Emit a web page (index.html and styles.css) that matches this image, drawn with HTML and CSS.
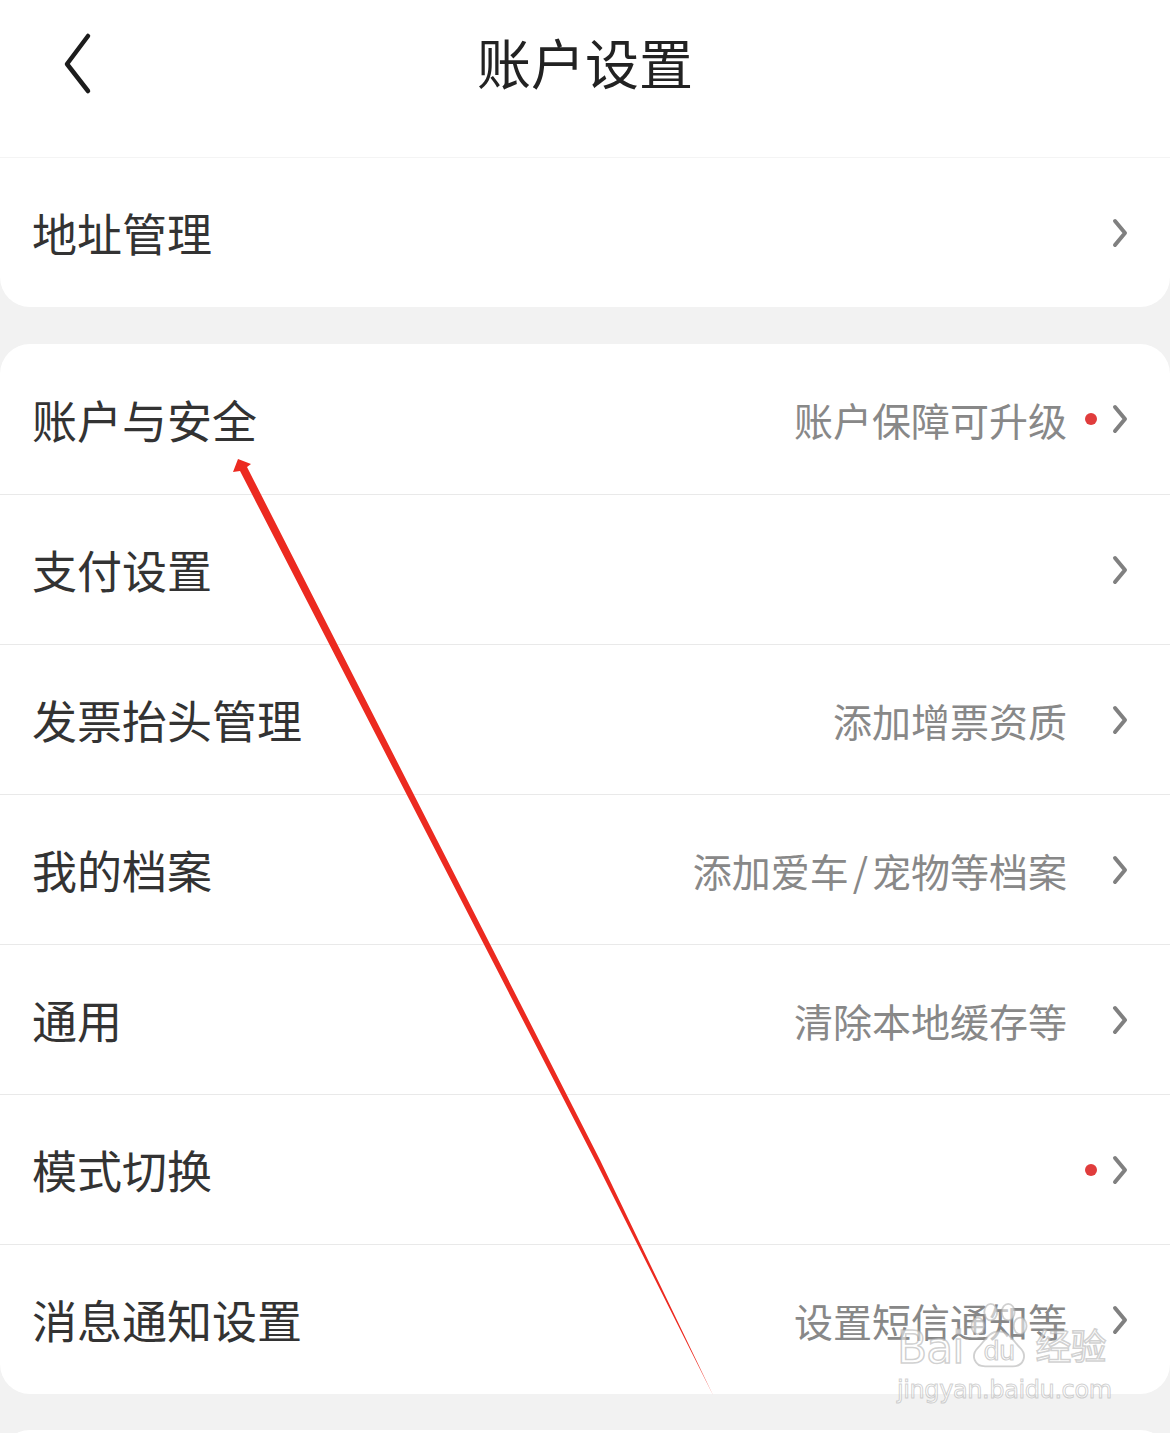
FILE: index.html
```html
<!DOCTYPE html>
<html lang="zh-CN">

<head>
    <meta charset="UTF-8">
    <meta name="viewport" content="width=device-width, initial-scale=1.0">
    <title>账户设置</title>
    <link rel="stylesheet" href="styles.css">
</head>

<body>
    <div class="header">
        <a class="back" href="#">
            <svg width="40" height="70" viewBox="0 0 40 70">
                <polyline points="28,6 7,34 28,61" fill="none" stroke="#1c1c1c" stroke-width="4.5"
                    stroke-linecap="round" stroke-linejoin="round" />
            </svg>
        </a>
        <div class="title">账户设置</div>
        <div></div>
    </div>

    <div class="card card-first">
        <div class="row">
            <span class="label">地址管理</span>
            <span class="extra">
                <span class="dot-slot"></span>
                <svg class="chevron" width="16" height="30" viewBox="0 0 16 30">
                    <polyline points="3,3 13,15 3,27" />
                </svg>
            </span>
        </div>
    </div>

    <div class="card" id="settingsList"></div>

    <div class="card card-last"></div>

    <!-- annotation arrow -->
    <svg class="arrow" width="1170" height="1433" viewBox="0 0 1170 1433">
        <polygon fill="#ec2a20"
            points="238,459 251,464 247,467 600,1160 713,1395 596,1162 240,471 233,472" />
    </svg>

    <div class="watermark">
        <div class="wm-logo">
            <span>Bai</span>
            <svg width="72" height="68" viewBox="0 0 78 74">
                <g fill="rgba(255,255,255,0.55)" stroke="rgba(170,170,170,0.55)" stroke-width="2">
                    <ellipse cx="16" cy="26" rx="7" ry="9" />
                    <ellipse cx="30" cy="11" rx="7" ry="9" />
                    <ellipse cx="49" cy="11" rx="7" ry="9" />
                    <ellipse cx="62" cy="26" rx="7" ry="9" />
                    <path d="M39 32 C28 32 24 42 16 50 C8 58 12 70 24 70 L54 70 C66 70 70 58 62 50 C54 42 50 32 39 32 Z" />
                </g>
                <text x="39" y="63" text-anchor="middle" class="wm-du">du</text>
            </svg>
            <span>经验</span>
        </div>
        <div class="wm-url">jingyan.baidu.com</div>
    </div>

    <script>
        const items = [
            { label: '账户与安全', extra: '账户保障可升级', dot: true },
            { label: '支付设置', extra: '' },
            { label: '发票抬头管理', extra: '添加增票资质' },
            { label: '我的档案', extra: '添加爱车<span class="slash">/</span>宠物等档案' },
            { label: '通用', extra: '清除本地缓存等' },
            { label: '模式切换', extra: '', dot: true },
            { label: '消息通知设置', extra: '设置短信通知等' }
        ];

        const list = document.getElementById('settingsList');
        items.forEach(function (item) {
            const row = document.createElement('div');
            row.className = 'row';
            row.innerHTML =
                '<span class="label">' + item.label + '</span>' +
                '<span class="extra">' +
                '<span class="hint">' + item.extra + '</span>' +
                '<span class="dot-slot">' + (item.dot ? '<i class="dot"></i>' : '') + '</span>' +
                '<svg class="chevron" width="16" height="30" viewBox="0 0 16 30"><polyline points="3,3 13,15 3,27" /></svg>' +
                '</span>';
            list.appendChild(row);
        });
    </script>
</body>

</html>
```

FILE: styles.css
```css
body {
    margin: 0;
    background-color: #f2f2f2;
    font-family: 'Noto Sans CJK SC', 'Noto Sans', sans-serif;
    color: #333;
    position: relative;
    overflow: hidden;
}

.header {
    display: grid;
    grid-template-columns: 1fr auto 1fr;
    align-items: start;
    height: 157px;
    box-sizing: border-box;
    padding-top: 30px;
    background-color: #fff;
}

.back {
    display: block;
    margin-left: 60px;
    width: 40px;
    height: 70px;
}

.title {
    font-size: 54px;
    line-height: 1;
    margin-top: 5px;
    color: #222;
}

.card {
    background-color: #fff;
    border-radius: 30px;
    overflow: hidden;
}

.card-first {
    border-top: 1px solid #f4f4f4;
    border-radius: 0 0 30px 30px;
    margin-bottom: 37px;
}

.card-first .row {
    height: 149px;
}

.card-last {
    margin-top: 36px;
    height: 80px;
}

.row {
    display: flex;
    align-items: center;
    justify-content: space-between;
    height: 150px;
    box-sizing: border-box;
    padding: 0 42px 0 32px;
}

.row + .row {
    border-top: 1px solid #e9e9e9;
}

.label {
    font-size: 45px;
    color: #333;
}

.extra {
    display: flex;
    align-items: center;
}

.hint {
    font-size: 39px;
    color: #888;
}

.slash {
    margin: 0 4px;
}

.dot-slot {
    display: flex;
    align-items: center;
    width: 45px;
}

.dot {
    display: block;
    width: 12px;
    height: 12px;
    margin-left: 18px;
    border-radius: 50%;
    background-color: #e03c3c;
}

.chevron polyline {
    fill: none;
    stroke: #808080;
    stroke-width: 4;
    stroke-linecap: round;
    stroke-linejoin: round;
}

.arrow {
    position: absolute;
    top: 0;
    left: 0;
    pointer-events: none;
}

.watermark {
    position: absolute;
    left: 897px;
    top: 1300px;
    pointer-events: none;
    font-family: 'DejaVu Sans', 'Noto Sans CJK SC', sans-serif;
    color: rgba(255, 255, 255, 0.55);
    -webkit-text-stroke: 1.5px rgba(170, 170, 170, 0.55);
}

.wm-logo {
    display: flex;
    align-items: flex-end;
    height: 70px;
    font-size: 44px;
    line-height: 1;
    letter-spacing: -1px;
}

.wm-logo span:last-child {
    font-size: 36px;
    margin-left: 0;
    margin-bottom: 4px;
}

.wm-du {
    font-family: 'DejaVu Sans', sans-serif;
    font-size: 28px;
    fill: rgba(255, 255, 255, 0.55);
    stroke: rgba(170, 170, 170, 0.6);
    stroke-width: 1.2;
}

.wm-url {
    font-size: 24px;
    line-height: 1;
    margin-top: 8px;
    letter-spacing: -0.4px;
    -webkit-text-stroke: 1px rgba(170, 170, 170, 0.55);
}
```
